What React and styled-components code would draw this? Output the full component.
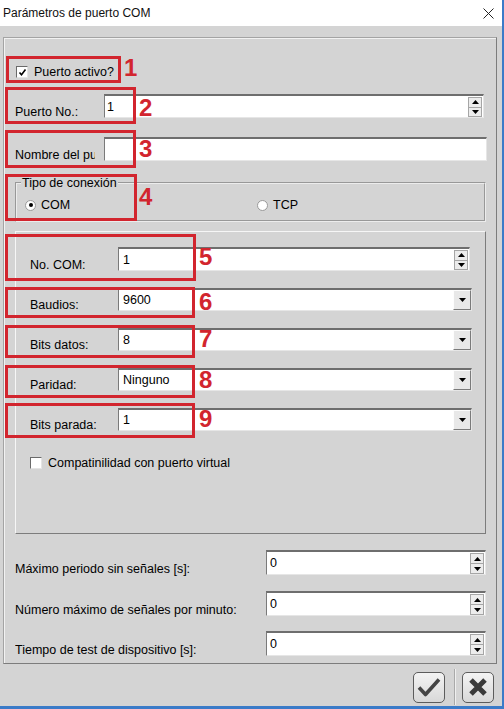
import React from 'react';
import styled, { createGlobalStyle } from 'styled-components';

const GlobalStyle = createGlobalStyle`
  html, body {
    margin: 0;
    padding: 0;
    background: #d4d4d4;
  }
  body {
    font-family: "Liberation Sans", Arial, sans-serif;
    font-size: 12.5px;
    color: #000;
  }
  * {
    box-sizing: border-box;
  }
`;

const marks = [
  { n: 1, x: 6, y: 56, w: 115, h: 27, nx: 124, ny: 56 },
  { n: 2, x: 5, y: 87, w: 131, h: 37, nx: 139, ny: 96 },
  { n: 3, x: 5, y: 130, w: 131, h: 38, nx: 139, ny: 137 },
  { n: 4, x: 5, y: 174, w: 132, h: 47, nx: 139, ny: 185 },
  { n: 5, x: 5, y: 234, w: 191, h: 47, nx: 199, ny: 245 },
  { n: 6, x: 5, y: 287, w: 190, h: 31, nx: 199, ny: 290 },
  { n: 7, x: 5, y: 325, w: 190, h: 33, nx: 199, ny: 327 },
  { n: 8, x: 5, y: 365, w: 190, h: 33, nx: 199, ny: 368 },
  { n: 9, x: 5, y: 403, w: 190, h: 35, nx: 199, ny: 407 },
];

const serialRows = [
  { label: 'Baudios:', value: '9600' },
  { label: 'Bits datos:', value: '8' },
  { label: 'Paridad:', value: 'Ninguno' },
  { label: 'Bits parada:', value: '1' },
];

const limitRows = [
  { label: 'Máximo periodo sin señales [s]:', mt: 16 },
  { label: 'Número máximo de señales por minuto:', mt: 16 },
  { label: 'Tiempo de test de dispositivo [s]:', mt: 15 },
];

const Arrow = ({ up }) => (
  <svg width="7" height="4" viewBox="0 0 7 4">
    <path d={up ? 'M0 4 L3.5 0 L7 4 Z' : 'M0 0 L7 0 L3.5 4 Z'} fill="#000" />
  </svg>
);

const SpinBox = ({ width, value, pad }) => (
  <Field $w={width} $pad={pad}>
    <Value>{value}</Value>
    <Spinner>
      <SpinButton><Arrow up /></SpinButton>
      <SpinButton><Arrow /></SpinButton>
    </Spinner>
  </Field>
);

const Combo = ({ value }) => (
  <Field $w={354} $pad={4}>
    <Value>{value}</Value>
    <DropButton><Arrow /></DropButton>
  </Field>
);

const CheckBox = ({ checked }) => (
  <Box>
    {checked && (
      <svg width="9" height="9" viewBox="0 0 9 9">
        <path d="M1.5 4.5 L3.5 6.8 L7.5 1.5" stroke="#000" strokeWidth="1.6" fill="none" />
      </svg>
    )}
  </Box>
);

const App = () => {
  return (
    <Window>
      <GlobalStyle />
      <TitleBar>
        <Title>Parámetros de puerto COM</Title>
        <svg width="11" height="11" viewBox="0 0 11 11">
          <path d="M0.5 0.5 L10.5 10.5 M10.5 0.5 L0.5 10.5" stroke="#222" strokeWidth="1" />
        </svg>
      </TitleBar>

      <Body>
        <OuterPanel>
          <Row $h={20} $mt={24} $pl={12} $align="center">
            <CheckBox checked />
            <CheckText>Puerto activo?</CheckText>
          </Row>

          <Row $h={24} $mt={12} $pl={11}>
            <Label $w={89}>Puerto No.:</Label>
            <SpinBox width={380} value="1" pad={2} />
          </Row>

          <Row $h={24} $mt={19} $pl={11}>
            <Label $w={80}>Nombre del puerto:</Label>
            <Gap $w={9} />
            <Field $w={383} $pad={2}>
              <Value />
            </Field>
          </Row>

          <Group>
            <Legend>Tipo de conexión</Legend>
            <RadioRow>
              <RadioItem>
                <Radio $on />
                COM
              </RadioItem>
              <RadioItem>
                <Radio />
                TCP
              </RadioItem>
            </RadioRow>
          </Group>

          <InnerPanel>
            <Row $h={24} $mt={15} $pl={14}>
              <Label $w={88}>No. COM:</Label>
              <SpinBox width={352} value="1" pad={4} />
            </Row>

            {serialRows.map((r) => (
              <Row key={r.label} $h={23} $mt={17} $pl={14}>
                <Label $w={88}>{r.label}</Label>
                <Combo value={r.value} />
              </Row>
            ))}

            <Row $h={20} $mt={22} $pl={14} $align="center">
              <CheckBox />
              <CheckText>Compatinilidad con puerto virtual</CheckText>
            </Row>
          </InnerPanel>

          {limitRows.map((r) => (
            <Row key={r.label} $h={25} $mt={r.mt} $pl={11}>
              <Label $w={251}>{r.label}</Label>
              <SpinBox width={220} value="0" pad={3} />
            </Row>
          ))}
        </OuterPanel>

        <ButtonBar>
          <DlgButton>
            <svg width="26" height="22" viewBox="0 0 26 22">
              <path d="M3 11.5 L9.5 18.5 L23 3.5" stroke="#444" strokeWidth="3.6" fill="none" strokeLinejoin="round" />
            </svg>
          </DlgButton>
          <Separator />
          <DlgButton>
            <svg width="22" height="22" viewBox="0 0 22 22">
              <path d="M4 4 L18 18 M18 4 L4 18" stroke="#3a3a3a" strokeWidth="5" />
            </svg>
          </DlgButton>
        </ButtonBar>
      </Body>

      {marks.map((m) => (
        <React.Fragment key={m.n}>
          <Mark style={{ left: m.x, top: m.y, width: m.w, height: m.h }} />
          <MarkNum style={{ left: m.nx, top: m.ny }}>{m.n}</MarkNum>
        </React.Fragment>
      ))}
    </Window>
  );
};

export default App;

const Window = styled.div`
  position: relative;
  width: 504px;
  height: 709px;
  display: flex;
  flex-direction: column;
  background: #d4d4d4;
  border-right: 2px solid #3b7bc8;
  border-bottom: 3px solid #3b7bc8;
  overflow: hidden;
`;

const TitleBar = styled.div`
  height: 26px;
  flex: none;
  display: flex;
  align-items: center;
  justify-content: space-between;
  padding: 0 8px 0 3px;
  background: #fff;
`;

const Title = styled.span`
  font-size: 12px;
  color: #111;
`;

const Body = styled.div`
  flex: 1;
  display: flex;
  flex-direction: column;
  padding: 11px 0 0 3px;
`;

const OuterPanel = styled.div`
  width: 494px;
  height: 627px;
  flex: none;
  display: flex;
  flex-direction: column;
  border: 1px solid;
  border-color: #a4a4a4 #7c7c7c #7c7c7c #a4a4a4;
  box-shadow: inset 1px 1px 0 #f2f2f2;
`;

const Row = styled.div`
  display: flex;
  align-items: ${(p) => p.$align || 'flex-end'};
  height: ${(p) => p.$h}px;
  margin-top: ${(p) => p.$mt}px;
  padding-left: ${(p) => p.$pl}px;
  flex: none;
`;

const Label = styled.span`
  width: ${(p) => p.$w}px;
  flex: none;
  line-height: 14px;
  margin-bottom: -1px;
  white-space: nowrap;
  overflow: hidden;
`;

const Gap = styled.span`
  width: ${(p) => p.$w}px;
  flex: none;
`;

const Field = styled.div`
  display: flex;
  align-items: center;
  width: ${(p) => p.$w}px;
  height: 100%;
  flex: none;
  background: #fff;
  border-style: solid;
  border-width: 2px 1px 1px 1px;
  border-color: #6e6e6e #e6e6e6 #e6e6e6 #7a7a7a;
  padding-left: ${(p) => p.$pad ?? 3}px;
`;

const Value = styled.span`
  flex: 1;
  line-height: 14px;
`;

const Spinner = styled.div`
  align-self: stretch;
  width: 14px;
  margin: 1px 1px 0 0;
  display: flex;
  flex-direction: column;
  border: 1px solid #a6a6a6;
  background: #ececec;
`;

const SpinButton = styled.div`
  flex: 1;
  display: flex;
  align-items: center;
  justify-content: center;
  & + & {
    border-top: 1px solid #a6a6a6;
  }
`;

const DropButton = styled.div`
  align-self: stretch;
  width: 18px;
  display: flex;
  align-items: center;
  justify-content: center;
  background: #e8e8e8;
  border: 1px solid;
  border-color: #fdfdfd #7a7a7a #7a7a7a #fdfdfd;
`;

const Box = styled.span`
  width: 12px;
  height: 12px;
  flex: none;
  display: flex;
  align-items: center;
  justify-content: center;
  background: #fff;
  border: 1px solid;
  border-color: #6a6a6a #e4e4e4 #e4e4e4 #6a6a6a;
`;

const CheckText = styled.span`
  margin-left: 6px;
  line-height: 14px;
`;

const Group = styled.fieldset`
  margin: 15px 0 0 11px;
  width: 471px;
  padding: 6px 8px 6px 8px;
  border: 2px groove #ececec;
  flex: none;
`;

const Legend = styled.legend`
  padding: 0 1px;
  margin-left: -4px;
  line-height: 14px;
`;

const RadioRow = styled.div`
  display: grid;
  grid-template-columns: 232px 1fr;
  height: 18px;
  align-items: center;
`;

const RadioItem = styled.label`
  display: flex;
  align-items: center;
  gap: 5px;
  line-height: 14px;
`;

const Radio = styled.span`
  width: 11px;
  height: 11px;
  border-radius: 50%;
  background: #fff;
  border: 1px solid #9a9a9a;
  display: flex;
  align-items: center;
  justify-content: center;
  &::after {
    content: '';
    width: 4px;
    height: 4px;
    border-radius: 50%;
    background: ${(p) => (p.$on ? '#000' : 'transparent')};
  }
`;

const InnerPanel = styled.div`
  margin: 9px 0 0 11px;
  width: 471px;
  height: 303px;
  flex: none;
  display: flex;
  flex-direction: column;
  border: 1px solid;
  border-color: #f6f6f6 #7c7c7c #7c7c7c #f6f6f6;
`;

const ButtonBar = styled.div`
  display: flex;
  align-items: center;
  justify-content: flex-end;
  padding: 5px 8px 0 0;
`;

const DlgButton = styled.button`
  width: 32px;
  height: 31px;
  padding: 0;
  display: flex;
  align-items: center;
  justify-content: center;
  border: 1px solid #5c5c5c;
  border-radius: 5px;
  background: linear-gradient(#f3f3f3, #d8d8d8);
`;

const Separator = styled.span`
  width: 1px;
  height: 36px;
  margin: 0 7px 0 9px;
  background: #a9a9a9;
  box-shadow: 1px 0 0 #efefef;
`;

const Mark = styled.div`
  position: absolute;
  border: 3px solid #d2252e;
  pointer-events: none;
`;

const MarkNum = styled.span`
  position: absolute;
  font: bold 24px/24px "Liberation Sans", Arial, sans-serif;
  color: #d2252e;
`;
